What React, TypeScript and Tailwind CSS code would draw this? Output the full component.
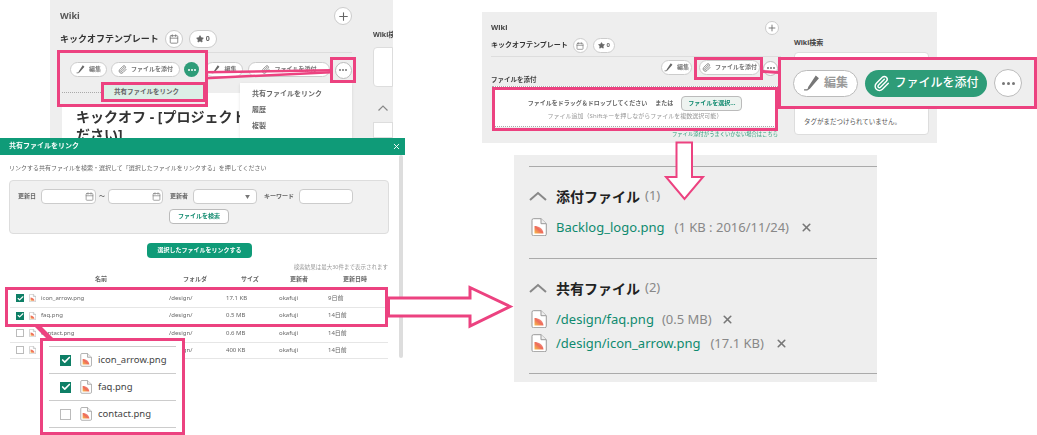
import React from "react";
import { Paperclip, Star, Plus, X, Calendar, Check } from "lucide-react";

const font = { fontFamily: '"Noto Sans","Noto Sans CJK JP",sans-serif' };

function FileIcon({ size = 14 }: { size?: number }) {
  return (
    <svg width={size} height={size * 1.15} viewBox="0 0 16 18.400" className="shrink-0">
      <defs>
        <linearGradient id="fg" x1="0" y1="1" x2="1" y2="0">
          <stop offset="0" stopColor="#f6c04a" />
          <stop offset="0.5" stopColor="#ee6a5a" />
          <stop offset="1" stopColor="#f4b5a8" />
        </linearGradient>
      </defs>
      <path d="M2.500 .7h7.500l5.300 5v10.500a1.500 1.500 0 0 1-1.500 1.500H2.500a1.500 1.500 0 0 1-1.500-1.500V2.200a1.500 1.500 0 0 1 1.500-1.500z" fill="#fff" stroke="#999" strokeWidth="1" />
      <path d="M10 .7v5h5.300" fill="#eee" stroke="#999" strokeWidth="1" />
      <path d="M3.500 15.500V8c4 0 8.500 2 9 7.500z" fill="url(#fg)" />
    </svg>
  );
}

function Pencil({ size = 10, color = "#666" }: { size?: number; color?: string }) {
  return (
    <svg width={size} height={size} viewBox="0 0 16 16" className="shrink-0">
      <path d="M12 .5l3 2.500-8.500 10-2.500 1.500H1v-1h3.200l.8-2.500z" fill={color} />
    </svg>
  );
}

function PillBtn({ w, h, label, clip }: { w: number; h: number; label: string; clip?: boolean }) {
  return (
    <div
      style={{ width: w, height: h }}
      className="flex shrink-0 items-center justify-center gap-1 rounded-full border border-[#ccc] bg-white text-[6px] font-bold text-[#777]"
    >
      {clip ? <Paperclip size={h * 0.6} color="#888" strokeWidth={2.500} /> : <Pencil size={h * 0.6} />}
      <span className="whitespace-nowrap">{label}</span>
    </div>
  );
}

function Dots({ d, green }: { d: number; green?: boolean }) {
  const s = Math.max(2, Math.round(d / 9));
  const g = d > 20 ? "gap-[2px]" : "gap-[1px]";
  return (
    <div
      style={{ width: d, height: d }}
      className={
        green
          ? `flex shrink-0 items-center justify-center ${g} rounded-full bg-[#2e9c78]`
          : `flex shrink-0 items-center justify-center ${g} rounded-full border border-[#bbb] bg-white`
      }
    >
      {[0, 1, 2].map((i) => (
        <span key={i} style={{ width: s, height: s }} className={green ? "rounded-full bg-white" : "rounded-full bg-[#777]"} />
      ))}
    </div>
  );
}

function Circle({ children, cls = "" }: { children?: React.ReactNode; cls?: string }) {
  return <div className={`flex items-center justify-center rounded-full border border-[#ccc] bg-white ${cls}`}>{children}</div>;
}

function Pink({ cls }: { cls: string }) {
  return <div className={`absolute border-[3px] border-[#ec4280] ${cls}`} />;
}

function Chevron() {
  return (
    <svg width="18" height="10" viewBox="0 0 18 10" className="shrink-0">
      <polyline points="1,9 9,2 17,9" fill="none" stroke="#888" strokeWidth="2" />
    </svg>
  );
}

const rows = [
  ["icon_arrow.png", "17.1 KB", "9日前", true],
  ["faq.png", "0.5 MB", "14日前", true],
  ["contact.png", "0.6 MB", "14日前", false],
  ["", "400 KB", "14日前", false],
] as const;

function Box({ checked, size }: { checked: boolean; size: number }) {
  return (
    <div
      style={{ width: size, height: size }}
      className={checked ? "flex shrink-0 items-center justify-center bg-[#0e7f66]" : "shrink-0 border border-[#bbb] bg-white"}
    >
      {checked && <Check size={size - 1} color="#fff" strokeWidth={4} />}
    </div>
  );
}

function FileRow({ name, meta, metaCls, xCls }: { name: string; meta: string; metaCls: string; xCls: string }) {
  return (
    <div className="flex items-center text-[13px] leading-[24px]">
      <FileIcon size={16} />
      <span className="ml-[9px] text-[#0f8a6e]">{name}</span>
      <span className={`text-[#888] ${metaCls}`}>{meta}</span>
      <X size={13} color="#777" strokeWidth={3} className={xCls} />
    </div>
  );
}

function PanelA() {
  return (
    <div className="absolute left-[50px] top-0 h-[138px] w-[343px] overflow-hidden bg-[#eeeeee] blur-[0.4px]">
      <div className="flex items-center justify-between pl-[10px] pr-[41px] pt-[7px]">
        <span className="text-[9px] font-bold text-[#555]">Wiki</span>
        <Circle cls="h-[18px] w-[18px]">
          <Plus size={13} color="#666" />
        </Circle>
      </div>
      <div className="flex items-center gap-[6px] pl-[10px] pt-[5px]">
        <span className="text-[9px] font-bold text-[#333]">キックオフテンプレート</span>
        <Circle cls="h-[18px] w-[18px]">
          <Calendar size={10} color="#777" />
        </Circle>
        <Circle cls="h-[18px] w-[28px] gap-[2px]">
          <Star size={8} fill="#666" color="#666" />
          <span className="text-[7px] font-bold text-[#666]">0</span>
        </Circle>
      </div>
      <div className="absolute left-[12px] top-[52px] h-[1px] w-[290px] bg-[#ddd]" />
      <div className="absolute left-[155px] top-[62px] flex gap-[5px]">
        <PillBtn w={38} h={15} label="編集" />
        <PillBtn w={82} h={15} label="ファイルを添付" clip />
      </div>
      <div className="absolute left-[12px] top-[93px] h-[45px] w-[178px] overflow-hidden whitespace-nowrap bg-white pl-[14px] pt-[15px] text-[14px] font-bold leading-[18px] text-[#333]">
        キックオフ - [プロジェクト
        <br />
        ださい]
      </div>
      <div className="absolute left-[190px] top-[83px] flex h-[55px] w-[112px] flex-col gap-[6px] bg-white px-[12px] pt-[6px] text-[7px] font-bold leading-[10px] text-[#666] shadow">
        <span>共有ファイルをリンク</span>
        <span>履歴</span>
        <span>複製</span>
      </div>
      <div className="absolute left-[323px] top-[47px] h-[40px] w-[20px] rounded-l border border-[#ddd] bg-white" />
      <div className="absolute left-[323px] top-[30px] w-[20px] overflow-hidden whitespace-nowrap text-[7px] font-bold text-[#444]">Wiki検索</div>
      <div className="absolute left-[328px] top-[105px]">
        <svg width="10" height="6" viewBox="0 0 10 6">
          <polyline points="0.5,5.500 5,1 9.500,5.500" fill="none" stroke="#888" strokeWidth="1.200" />
        </svg>
      </div>
      <div className="absolute left-[323px] top-[122px] h-[16px] w-[20px] border border-[#ddd] bg-white" />
    </div>
  );
}

function OverlayA() {
  return (
    <div className="absolute left-[57px] top-[50px] h-[57px] w-[151px] border-[3px] border-[#ec4280] bg-[#eeeeee]">
      <div className="flex items-center gap-[4px] pl-[10px] pt-[9px] blur-[0.4px]">
        <PillBtn w={37} h={15} label="編集" />
        <PillBtn w={69} h={15} label="ファイルを添付" clip />
        <Dots d={15} green />
      </div>
      <div className="mx-[2px] mt-[15px] border-t border-dotted border-[#aaa]" />
    </div>
  );
}

function Modal() {
  const col = "text-[6px] text-[#666]";
  return (
    <div className="absolute left-0 top-[138px] h-[222px] w-[405px] bg-white blur-[0.4px]">
      <div className="flex h-[17px] items-center justify-between bg-[#0f9b78] pl-[9px] pr-[4px] text-[7px] font-bold text-white">
        <span>共有ファイルをリンク</span>
        <X size={9} color="#fff" strokeWidth={2.500} />
      </div>
      <div className="absolute bottom-[2px] right-[2px] top-[17px] w-[4px] rounded bg-[#ddd]" />
      <div className="pl-[9px] pt-[8px] text-[6px] leading-[10px] text-[#666]">
        リンクする共有ファイルを検索・選択して「選択したファイルをリンクする」を押してください
      </div>
      <div className="ml-[9px] mt-[7px] h-[54px] w-[380px] rounded-sm border border-[#ddd] bg-[#f1f1f1] pt-[8px]">
        <div className="flex items-center text-[6px] font-bold text-[#666]">
          <span className="ml-[8px] w-[23px]">更新日</span>
          <div className="flex h-[15px] w-[55px] items-center justify-end rounded-sm border border-[#ccc] bg-white pr-[1px]">
            <Calendar size={9} color="#888" />
          </div>
          <span className="mx-[3px]">〜</span>
          <div className="flex h-[15px] w-[55px] items-center justify-end rounded-sm border border-[#ccc] bg-white pr-[1px]">
            <Calendar size={9} color="#888" />
          </div>
          <span className="ml-[7px] w-[23px]">更新者</span>
          <div className="flex h-[15px] w-[64px] items-center justify-end rounded-sm border border-[#ccc] bg-white pr-[6px] text-[5px] text-[#777]">▼</div>
          <span className="ml-[7px] w-[30px]">キーワード</span>
          <div className="ml-[5px] h-[15px] w-[54px] rounded-sm border border-[#ccc] bg-white" />
        </div>
        <div className="mt-[5px] flex justify-center">
          <div className="flex h-[15px] w-[60px] items-center justify-center rounded-sm border border-[#bbb] bg-white text-[6px] font-bold text-[#0f8a6e]">
            ファイルを検索
          </div>
        </div>
      </div>
      <div className="mt-[9px] flex justify-center pr-[6px]">
        <div className="flex h-[15px] w-[105px] items-center justify-center rounded-sm bg-[#0f9b78] text-[6px] font-bold text-white">
          選択したファイルをリンクする
        </div>
      </div>
      <div className="w-[388px] pt-[5px] text-right text-[5.500px] leading-[8px] text-[#999]">検索結果は最大30件まで表示されます</div>
      <div className={`ml-[10px] mt-[2px] mb-[3px] flex h-[13px] w-[378px] items-center font-bold ${col}`}>
        <span className="ml-[85px] w-[88px]">名前</span>
        <span className="w-[58px]">フォルダ</span>
        <span className="w-[49px]">サイズ</span>
        <span className="w-[53px]">更新者</span>
        <span>更新日時</span>
      </div>
      {rows.map(([n, s, d, c], i) => (
        <div key={i} className={`ml-[10px] flex h-[17.500px] w-[378px] items-center border-t border-[#e6e6e6] ${col} ${i === 3 ? "border-b" : ""}`}>
          <div className="ml-[6px]"><Box checked={c} size={8} /></div>
          <div className="ml-[5px]"><FileIcon size={7} /></div>
          <span className="ml-[5px] w-[128px]">{n}</span>
          <span className="w-[57px]">/design/</span>
          <span className="w-[53px]">{s}</span>
          <span className="w-[49px]">okafuji</span>
          <span>{d}</span>
        </div>
      ))}
    </div>
  );
}

function ZoomRows() {
  return (
    <div className="absolute left-[40px] top-[338px] h-[97px] w-[145px] border-[3px] border-[#ec4280] bg-white">
      <div className="mx-[6px] mt-[5px] border-t border-[#ccc]">
        {rows.slice(0, 3).map(([n, , , c], i) => (
          <div key={i} className="flex h-[27px] items-center border-b border-[#ccc] pl-[11px] text-[9.500px] text-[#444]">
            <Box checked={c} size={11} />
            <div className="ml-[9px]"><FileIcon size={12} /></div>
            <span className="ml-[6px]">{n}</span>
          </div>
        ))}
      </div>
    </div>
  );
}

function PanelB() {
  return (
    <div className="absolute left-[482px] top-[12px] h-[131px] w-[455px] bg-[#eeeeee]">
      <div className="blur-[0.4px]">
        <div className="flex w-[297px] items-center justify-between pl-[9px] pt-[9px]">
          <span className="text-[7.500px] font-bold text-[#444]">Wiki</span>
          <Circle cls="h-[14px] w-[14px]">
            <Plus size={10} color="#666" />
          </Circle>
        </div>
        <div className="flex items-center gap-[5px] pl-[9px] pt-[3px]">
          <span className="text-[7px] font-bold text-[#333]">キックオフテンプレート</span>
          <Circle cls="h-[15px] w-[15px]">
            <Calendar size={8} color="#777" />
          </Circle>
          <Circle cls="h-[15px] w-[22px] gap-[2px]">
            <Star size={7} fill="#666" color="#666" />
            <span className="text-[6px] font-bold text-[#666]">0</span>
          </Circle>
        </div>
        <div className="ml-[9px] mt-[3px] h-[1px] w-[290px] bg-[#ddd]" />
        <div className="flex w-[278px] justify-end gap-[7px] pt-[3px]">
          <PillBtn w={31} h={15} label="編集" />
          <PillBtn w={61} h={15} label="ファイルを添付" clip />
        </div>
        <div className="pl-[9px] text-[6.500px] font-bold leading-[10px] text-[#444]">ファイルを添付</div>
        <div className="ml-[10px] mt-[1px] flex h-[41px] w-[286px] flex-col items-center justify-center border border-dotted border-[#aaa] bg-white pt-[3px] text-[6px] text-[#666]">
          <div className="flex items-center gap-[8px] font-bold">
            <span>ファイルをドラッグ＆ドロップしてください</span>
            <span>または</span>
            <span className="rounded-sm border border-[#bbb] bg-[#eef3f0] px-[6px] py-[2px] text-[#0f8a6e]">ファイルを選択...</span>
          </div>
          <div className="mt-[1px] text-[#999]">ファイル追加（Shiftキーを押しながらファイルを複数選択可能）</div>
        </div>
        <div className="w-[296px] pt-[3px] text-right text-[5.300px] leading-[8px] text-[#2e9c78]">ファイル添付がうまくいかない場合はこちら</div>
      </div>
      <div className="absolute left-[312px] top-[26px] text-[7px] font-bold text-[#444]">Wiki検索</div>
      <div className="absolute left-[312px] top-[40px] h-[83px] w-[135px] rounded-sm border border-[#ddd] bg-white pl-[9px] pt-[63px] text-[6.500px] leading-[12px] text-[#555]">
        タグがまだつけられていません。
      </div>
    </div>
  );
}

function OverlayB() {
  return (
    <>
      <Pink cls="left-[694px] top-[57px] h-[23px] w-[69px]" />
      <Pink cls="left-[492px] top-[87px] h-[44px] w-[286px]" />
      <div className="absolute left-[763px] top-[60px] flex h-[16px] w-[16px] items-center">
        <Dots d={15} />
      </div>
      <div className="absolute left-[778px] top-[57px] flex h-[52px] w-[259px] items-center gap-[7px] border-[3px] border-[#ec4280] bg-[#eeeeee] pl-[12px]">
        <div className="flex h-[27px] w-[65px] items-center justify-center gap-[4px] rounded-full border border-[#bbb] bg-white text-[12px] font-bold text-[#999]">
          <Pencil size={17} color="#777" />
          <span>編集</span>
        </div>
        <div className="flex h-[27px] w-[122px] items-center justify-center gap-[4px] rounded-full bg-[#2e9c78] text-[12px] font-medium text-white">
          <Paperclip size={17} color="#fff" strokeWidth={2} />
          <span>ファイルを添付</span>
        </div>
        <Dots d={28} />
      </div>
    </>
  );
}

function PanelC() {
  return (
    <div className="absolute left-[514px] top-[155px] h-[227px] w-[363px] bg-[#eeeeee] pl-[15px] pt-[11px]">
      <div className="border-t border-[#aaa] pt-[17px]">
        <div className="flex h-[24px] items-center text-[14px] font-bold text-[#222]">
          <Chevron />
          <span className="ml-[9px]">添付ファイル</span>
          <span className="ml-[5px] text-[13px] font-normal text-[#888]">(1)</span>
        </div>
        <div className="mt-[7px] pl-[2px]">
          <FileRow name="Backlog_logo.png" meta="(1 KB : 2016/11/24)" metaCls="ml-[10px]" xCls="ml-[11px]" />
        </div>
      </div>
      <div className="mt-[19px] border-t border-[#aaa] pt-[17px]">
        <div className="flex h-[24px] items-center text-[14px] font-bold text-[#222]">
          <Chevron />
          <span className="ml-[9px]">共有ファイル</span>
          <span className="ml-[5px] text-[13px] font-normal text-[#888]">(2)</span>
        </div>
        <div className="mt-[7px] pl-[2px]">
          <FileRow name="/design/faq.png" meta="(0.5 MB)" metaCls="ml-[8px]" xCls="ml-[9px]" />
          <FileRow name="/design/icon_arrow.png" meta="(17.1 KB)" metaCls="ml-[10px]" xCls="ml-[11px]" />
        </div>
      </div>
      <div className="mt-[18px] border-t border-[#aaa]" />
    </div>
  );
}

function Annotations() {
  return (
    <svg width="1037" height="435" className="pointer-events-none absolute left-0 top-0">
      <polygon points="205,71 331,69 331,71.500 205,73.500" fill="#ec4280" />
      <polygon points="205,77 331,71 331,73.500 205,79.500" fill="#ec4280" />
      <polygon points="763,70 779,71 779,74 763,73" fill="#ec4280" />
      <polygon points="35,327 48,340 55,340 42,327" fill="#ec4280" />
      <polygon points="388.500,298 470,298 470,287.500 510,306.500 470,326 470,316 388.500,316" fill="#fff" stroke="#ec4280" strokeWidth="3" />
      <polygon points="676.500,142.500 692,142.500 692,177 703,177 684.500,199 666,177 676.500,177" fill="#fff" stroke="#ec4280" strokeWidth="2" />
    </svg>
  );
}

export default function App() {
  return (
    <div className="relative h-[435px] w-[1037px] overflow-hidden bg-white" style={font}>
      <PanelA />
      <OverlayA />
      <div className="absolute left-[330px] top-[57px] flex h-[26px] w-[26px] items-center justify-center border-[3px] border-[#ec4280] bg-[#eeeeee] blur-[0.3px]">
        <Dots d={17} />
      </div>
      <div className="absolute left-[101px] top-[82px] flex h-[20px] w-[105px] items-center border-[3px] border-[#ec4280] bg-[#dcefe6] pl-[10px] text-[6.500px] font-bold text-[#666]">
        共有ファイルをリンク
      </div>
      <Modal />
      <Pink cls="left-[5px] top-[287px] h-[40px] w-[383px]" />
      <ZoomRows />
      <PanelB />
      <PanelC />
      <OverlayB />
      <Annotations />
    </div>
  );
}
